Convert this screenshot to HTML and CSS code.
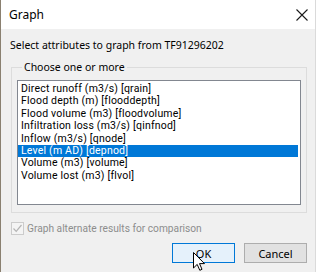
FILE: index.html
```html
<!DOCTYPE html>
<html lang="en">
<head>
<meta charset="UTF-8">
<title>Graph</title>
<link rel="stylesheet" href="styles.css">
</head>
<body>
<div class="window">
    <div class="titlebar">
        <span class="title">Graph</span>
        <svg class="close" width="12" height="12" viewBox="0 0 12 12">
            <path d="M0.5 0.5 L11.5 11.5 M11.5 0.5 L0.5 11.5" stroke="#1a1a1a" stroke-width="1.1" fill="none"/>
        </svg>
    </div>
    <div class="content">
        <p class="prompt">Select attributes to graph from TF91296202</p>
        <fieldset class="group">
            <legend>Choose one or more</legend>
            <ul class="listbox">
                <li>Direct runoff (m3/s) [qrain]</li>
                <li>Flood depth (m) [flooddepth]</li>
                <li>Flood volume (m3) [floodvolume]</li>
                <li>Infiltration loss (m3/s) [qinfnod]</li>
                <li>Inflow (m3/s) [qnode]</li>
                <li class="selected">Level (m AD) [depnod]</li>
                <li>Volume (m3) [volume]</li>
                <li>Volume lost (m3) [flvol]</li>
            </ul>
        </fieldset>
        <label class="check">
            <span class="box">
                <svg width="11" height="11" viewBox="0 0 11 11"><path d="M1.5 5.5 L4.2 8.3 L9.5 2" stroke="#b4b4b4" stroke-width="1.2" fill="none"/></svg>
            </span>
            Graph alternate results for comparison
        </label>
        <div class="buttons">
            <button class="btn default">OK</button>
            <button class="btn">Cancel</button>
        </div>
    </div>
    <svg class="cursor" width="13" height="19" viewBox="0 0 13 19">
        <path d="M0.5 0.5 L0.5 16 L4.2 12.4 L6.8 18.3 L9 17.3 L6.5 11.6 L11.5 11.6 Z" fill="#fff" stroke="#000" stroke-width="1"/>
    </svg>
</div>
</body>
</html>
```
FILE: styles.css
```css
*{margin:0;padding:0;box-sizing:border-box}
body{font-family:"Noto Sans","Open Sans",sans-serif;font-size:10.5px;color:#000;background:#f0f0f0}
.window{position:relative;width:316px;height:272px;border-left:1px solid #8a8070;border-right:1px solid #dadada;display:flex;flex-direction:column;overflow:hidden}
.titlebar{height:29px;background:#fff;display:flex;align-items:center;justify-content:space-between;padding:0 7px 0 8px}
.title{font-size:12px}
.content{flex:1;background:#f0f0f0;padding:0 8px 0 10px}
.prompt{margin-top:9px;line-height:14px;margin-left:-1px}
.group{margin-top:8px;border:1px solid #dcdcdc;padding:6px 5px 7px 5px}
.group legend{line-height:14px;padding:0 2px;margin-left:5px}
.listbox{list-style:none;height:125px;background:#fff;border:1px solid #828790;padding:2px 2px 0 0;font-family:Roboto,sans-serif;font-size:10.5px;letter-spacing:0.2px}
.listbox li{line-height:12.4px;height:12.4px;padding-left:3px;white-space:nowrap}
.listbox li.selected{background:#0078d7;color:#fff}
.check{display:flex;align-items:center;gap:3px;margin-top:9px;height:13px;color:#8d8d8d;font-family:Roboto,sans-serif;font-size:10.2px}
.box{width:13px;height:13px;border:1px solid #cccccc;background:#f4f4f4;display:flex;align-items:center;justify-content:center}
.buttons{display:flex;justify-content:flex-end;gap:9px;margin-top:8px}
.btn{width:63px;height:20px;font:inherit;font-size:11px;border:1px solid #adadad;background:#e1e1e1;color:#000}
.btn.default{border-color:#0078d7;background:#e5f1fb}
.cursor{position:absolute;left:192px;top:252px}
```
